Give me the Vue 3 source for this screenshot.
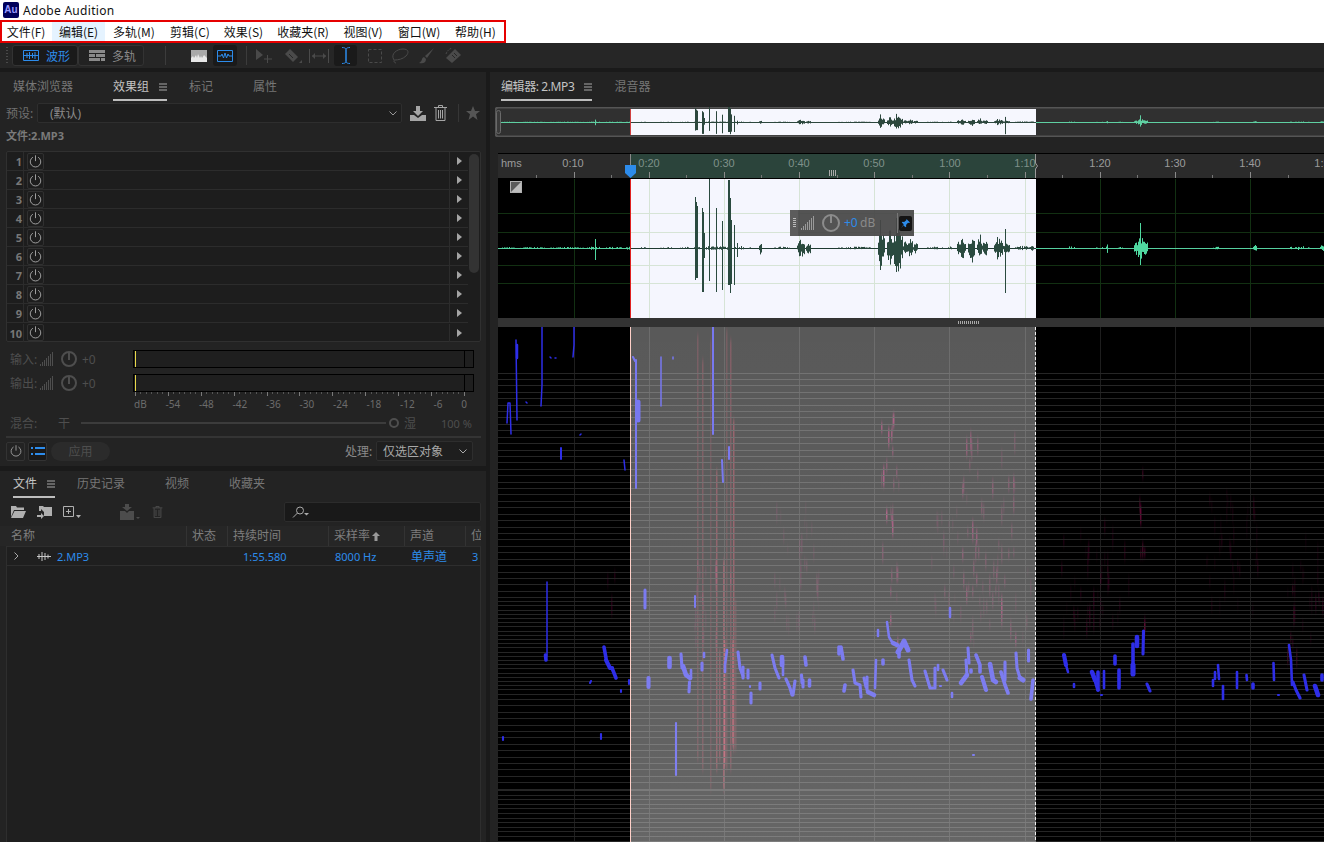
<script setup>
const menus = [
  ['文件(F)', 52], ['编辑(E)', 53], ['多轨(M)', 58], ['剪辑(C)', 54], ['效果(S)', 53],
  ['收藏夹(R)', 66], ['视图(V)', 54], ['窗口(W)', 58], ['帮助(H)', 55],
];
const rackRows = [1, 2, 3, 4, 5, 6, 7, 8, 9, 10];
const scaleLabels = ['dB', '-54', '-48', '-42', '-36', '-30', '-24', '-18', '-12', '-6', '0'];
const signalBars = [2, 4, 6, 8, 10, 12, 14];

const SEL_L = 630;
const SEL_R = 1036;
const MID = 248;

// seeded so that every run draws the same picture
let seed = 12345;
function rnd() {
  seed = (seed * 1664525 + 1013904223) % 4294967296;
  return seed / 4294967296;
}

/* ---- waveform ---- */
const lumps = [
  [500, 515, 1.5], [520, 545, 1.5], [550, 585, 1.5], [586, 600, 3.5], [606, 622, 2], [626, 630, 3],
  [640, 646, 2], [660, 676, 1.5], [680, 690, 2], [694, 738, 3], [738, 744, 3], [748, 752, 1.5],
  [759, 762, 7], [774, 790, 2], [797, 805, 10], [806, 811, 7], [838, 872, 2], [878, 885, 20],
  [887, 892, 20], [892, 903, 25], [903, 907, 7], [907, 913, 12], [913, 918, 6], [926, 943, 2],
  [948, 952, 3], [957, 966, 11], [968, 975, 15], [977, 982, 15], [982, 988, 8], [994, 1003, 13],
  [1003, 1010, 6], [1015, 1030, 3], [1030, 1034, 4], [1064, 1075, 2.5], [1095, 1106, 1.5], [1106, 1108, 5],
  [1118, 1123, 1.5], [1134, 1148, 11], [1213, 1220, 2], [1237, 1240, 2], [1253, 1257, 4], [1288, 1310, 3],
  [1320, 1324, 4],
];
const spikes = [
  [595, 9, 12], [695, 51, 32], [696, 46, 30], [697, 42, 30], [702, 40, 44], [703, 36, 44], [704, 15, 10],
  [709, 70, 33], [716, 40, 44], [722, 27, 42], [728, 68, 37], [729, 68, 37], [730, 50, 45], [731, 28, 36],
  [734, 23, 37], [737, 5, 9], [880, 28, 22], [896, 30, 24], [1005, 19, 45], [1140, 25, 17],
];
const up = {};
const down = {};
lumps.forEach(([a, b, amp]) => {
  for (let x = a; x < b; x++) {
    if (amp <= 3.5 && rnd() < 0.45) continue;
    const t = (x - a) / Math.max(1, b - a);
    const w = 0.4 + 0.6 * Math.sin(Math.PI * t);
    const k = amp <= 3.5 ? 0.7 : 1;
    up[x] = Math.max(up[x] || 0, amp * k * w * (0.3 + 0.7 * rnd()));
    down[x] = Math.max(down[x] || 0, amp * k * w * (0.3 + 0.7 * rnd()));
  }
});
spikes.forEach(([x, u, d]) => {
  up[x] = u;
  down[x] = d;
});

function wavePath(from, to, mid, k) {
  let d = '';
  for (let x = from; x < to; x++) {
    if (!up[x]) continue;
    d += `M${x + 0.5} ${(mid - up[x] * k).toFixed(1)}V${(mid + down[x] * k).toFixed(1)}`;
  }
  return d;
}
const waveOutside = wavePath(498, SEL_L, MID, 1) + wavePath(SEL_R, 1324, MID, 1);
const waveInside = wavePath(SEL_L, SEL_R, MID, 1);
const overOutside = wavePath(498, SEL_L, 122, 0.27) + wavePath(SEL_R, 1324, 122, 0.27);
const overInside = wavePath(SEL_L, SEL_R, 122, 0.27);

/* ---- ruler and grids ---- */
const rulerLabels = [
  ['0:10', 573], ['0:20', 649], ['0:30', 724], ['0:40', 799], ['0:50', 874], ['1:00', 950],
  ['1:10', 1025], ['1:20', 1100], ['1:30', 1175], ['1:40', 1250], ['1:50', 1325],
];
const minorTicks = [];
const majorTicks = [];
for (let i = 0; i < 12; i++) {
  const x = 498.5 + 75.15 * i;
  if (i > 0) majorTicks.push(Math.round(x) + 0.5);
  minorTicks.push(Math.round(x + 37.5) + 0.5);
}
const gridX = majorTicks.filter((x) => x < 1324);
const gridY = [213.5, 232.5, 265.5, 283.5];

/* ---- spectrogram ---- */
const specLines = [];
for (let y = 372.5; y < 596; y += 6.42) specLines.push(Math.round(y) + 0.5);
for (let y = 597; y < 697; y += 4.2) specLines.push(Math.round(y) + 0.5);
for (let y = 699; y < 790; y += 6.4) specLines.push(Math.round(y) + 0.5);
for (let y = 790; y < 842; y += 4.6) specLines.push(Math.round(y) + 0.5);

const hotStreaks = [
  [697, 335, 760, 0.22], [702, 360, 770, 0.26], [710, 340, 790, 0.18], [716, 470, 770, 0.38],
  [723, 560, 790, 0.42], [726, 330, 770, 0.2], [730, 340, 770, 0.28], [733, 420, 750, 0.42],
  [735, 600, 750, 0.2], [724, 640, 765, 0.55], [732, 640, 745, 0.5], [719, 650, 760, 0.35],
];
const clusters = [
  [880, 900, 410, 640, 0.8], [960, 1015, 430, 640, 0.5], [1138, 1146, 420, 640, 0.6],
  [1285, 1300, 520, 650, 0.3], [1020, 1030, 560, 640, 0.25], [605, 615, 550, 600, 0.3],
  [1060, 1130, 520, 620, 0.2], [1205, 1260, 490, 610, 0.15], [690, 740, 560, 640, 0.3],
  [770, 820, 500, 620, 0.22], [930, 960, 500, 620, 0.2], [1300, 1324, 530, 640, 0.2],
];
const speckles = [];
clusters.forEach(([x1, x2, y1, y2, a]) => {
  const n = Math.round((x2 - x1) * (y2 - y1) / 180);
  for (let i = 0; i < n; i++) {
    speckles.push({
      x: Math.round(x1 + (x2 - x1) * rnd()),
      y: Math.round(y1 + (y2 - y1) * rnd()),
      h: 4 + Math.round(rnd() * 16),
      o: (a * (0.3 + 0.7 * rnd())).toFixed(2),
    });
  }
});

// each stroke: width, then x y pairs in page coordinates
const strokes = [
  [1.5, 516, 340, 517, 420], [2.5, 517, 345, 517, 358], [1.5, 542, 327, 542, 385, 541, 406],
  [1.5, 574, 327, 574, 345, 573, 357], [1.5, 550, 357, 551, 358], [1.5, 555, 358, 556, 358],
  [1.5, 526, 402, 527, 403], [1.5, 507, 423, 508, 403, 510, 403, 511, 434],
  [1.5, 580, 435, 581, 434], [2, 561, 448, 561, 459], [1.5, 624, 460, 625, 470],
  [1.5, 547, 582, 547, 655, 546, 660], [3, 545.5, 655, 546, 660],
  [3, 604, 647, 606, 658], [3.5, 606, 660, 610, 668, 612, 668], [3, 612, 668, 616, 678],
  [1.5, 590, 683, 591, 681], [1.5, 621, 690, 621, 692], [1.5, 629, 680, 629, 684],
  [1.5, 503, 737, 503, 740], [1.5, 601, 734, 601, 739],
  [2, 636, 360, 636, 488], [2, 633, 357, 635, 361], [5, 638, 402, 638, 420], [1.5, 661, 357, 661, 406],
  [2, 713, 327, 713, 434], [1.5, 673, 357, 673, 359], [2, 729, 447, 729, 459], [2, 722, 460, 723, 482],
  [3, 645, 590, 645, 608], [2, 695, 596, 695, 607], [1.5, 676, 723, 676, 775], [2.5, 950, 608, 950, 617],
  [1.5, 973, 755, 974, 755],
  [4, 669.5, 658, 669.5, 667], [3.5, 648.5, 678, 648.5, 687], [2.5, 681, 654, 682, 668], [4, 683, 666, 686, 675, 690, 678],
  [2, 691, 670, 691, 678], [2.5, 689.5, 682, 689, 692], [2, 704, 653, 704, 657], [2.5, 702, 663, 702, 670],
  [2, 727, 650, 725, 665, 725, 672], [2.5, 738, 652, 740, 668, 743, 676], [2.5, 743, 667, 743, 678], [2.5, 748, 670, 748, 678],
  [1.5, 750, 686, 750, 687], [2.5, 751, 693, 751, 703], [2.5, 760, 683, 760, 689],
  [2.5, 772, 655, 775, 668, 779, 678], [2, 783, 660, 783, 675], [4, 782, 657, 782, 665],
  [2.5, 786, 679, 790, 688, 792, 695], [2.5, 795, 681, 793, 695], [2.5, 801.5, 675, 802, 683], [2.5, 803, 680, 803, 687],
  [3, 805, 657, 806, 665], [3, 809.5, 680, 809.5, 686], [3, 839, 647, 839, 654],
  [3, 841, 647, 843, 659], [3, 845, 685, 844, 691], [2.5, 853, 670, 855, 683, 860, 685, 861, 697],
  [2.5, 864, 678, 866, 687], [2.5, 867, 677, 867, 690], [4, 868, 692, 874, 695], [2, 876, 660, 875, 688],
  [2.5, 878, 630, 878, 636], [3, 883, 660, 883, 664], [2.5, 887, 622, 889, 637, 892, 642], [4, 893, 643, 897, 645],
  [5, 898, 652, 902, 645, 904, 641, 908, 650], [3, 899, 653, 899, 657], [2.5, 909, 660, 912, 680, 915, 686],
  [2.5, 925, 671, 930, 688, 933, 688], [2.5, 935, 668, 935, 688], [2, 938, 665, 938, 670], [2.5, 943, 670, 947, 680],
  [1.5, 940, 686, 941, 686], [2, 952, 693, 952, 697], [4, 961, 683, 967, 675], [2.5, 967, 675, 966, 660],
  [2.5, 968, 648, 969, 663], [3, 971, 670, 971, 672], [3, 976, 655, 980, 665, 980, 672], [3.5, 982, 677, 986, 690],
  [4, 990, 664, 993, 680, 996, 682], [3, 1001, 672, 1005, 685, 1008, 693], [2.5, 1005, 662, 1005, 680],
  [2.5, 1016, 653, 1017, 668, 1020, 678], [5, 1020, 678, 1023, 680], [2.5, 1028.5, 650, 1028.5, 661], [3, 1033, 680, 1031, 699],
  [3.5, 1064, 655, 1066, 665], [2, 1066, 665, 1068, 672], [2, 1074, 684, 1074, 687], [4, 1092, 672, 1095, 680], [3, 1095, 680, 1098, 690],
  [3, 1098, 672, 1098, 690], [2, 1104, 671, 1104, 688], [1.5, 1101, 695, 1102, 695], [3, 1115, 656, 1115, 664],
  [3, 1119, 670, 1119, 688], [3, 1133, 644, 1133, 674], [4.5, 1133, 665, 1133, 674], [4, 1137, 637, 1137, 646],
  [2.5, 1143.5, 631, 1143, 654], [2.5, 1147, 684, 1150, 691], [2, 1213, 680, 1213, 686], [2, 1215, 672, 1215, 679],
  [2, 1218, 665, 1219, 679], [2, 1223, 686, 1223, 699], [2, 1237, 672, 1237, 688], [2, 1246.5, 675, 1247, 680],
  [3, 1253, 684, 1253, 688], [2, 1273.5, 663, 1274, 680], [1.5, 1278, 695, 1279, 695],
  [2, 1289, 645, 1291, 660, 1292, 685], [2.5, 1293, 682, 1296, 690, 1300, 698], [2.5, 1304, 675, 1307, 690],
  [4, 1315, 686, 1318, 695], [3, 1322, 675, 1322, 680],
].map(([w, ...p]) => ({ w: p[1] > 630 && w < 5 ? w + 0.6 : w, points: p.join(' ') }));
</script>

<template>
  <div class="app">
    <svg class="sprite" width="0" height="0">
      <symbol id="i-power" viewBox="0 0 16 16">
        <path d="M5.2 3.4a5.6 5.6 0 1 0 5.6 0M8 1.4v6.2" fill="none" stroke="currentColor" stroke-width="1" />
      </symbol>
      <symbol id="i-menu" viewBox="0 0 8 8">
        <path d="M0 1h8M0 4h8M0 7h8" stroke="currentColor" stroke-width="1" />
      </symbol>
    </svg>

    <div class="titlebar">
      <span class="au-logo">Au</span>
      <span>Adobe Audition</span>
    </div>
    <div class="menubar">
      <span
        v-for="([m, w], i) in menus"
        :key="m"
        class="menu-item"
        :class="{ hover: i === 1 }"
        :style="{ width: w + 'px' }"
      >{{ m }}</span>
    </div>

    <div class="toolbar">
      <span class="grip"></span>
      <div class="mode-group">
        <button class="mode-btn on">
          <svg width="16" height="11" viewBox="0 0 16 11"><path d="M.5.5h15v10H.5zM0 5.5h16M4 3v5M6.5 2v7M9.5 3v5M12 2v7" fill="none" stroke="currentColor" /></svg>
          <span>波形</span>
        </button>
        <button class="mode-btn">
          <svg width="16" height="11" viewBox="0 0 16 11"><path d="M0 0h16v3H0zM0 4h6v3H0zM7 4h9v3H7zM0 8h11v3H0zM12 8h4v3h-4z" fill="currentColor" /></svg>
          <span>多轨</span>
        </button>
      </div>
      <span class="tool-sep first"></span>
      <svg class="tool view" width="16" height="12" viewBox="0 0 16 12"><rect width="16" height="12" fill="#a9a9a9" /><path d="M0 12V8l2-2 1 2 2-3 1 3 1-4 2 4 1-2 1 2 2-3 3 3v4z" fill="#e8e8e8" /></svg>
      <span class="tool-box wave-view">
        <svg width="16" height="12" viewBox="0 0 16 12"><path d="M.5.5h15v11H.5zM1 6h3l1-2 1.500 4L8 3l1.500 5L11 4l1 2h3" fill="none" stroke="#2d8ceb" /></svg>
      </span>
      <span class="tool-sep"></span>
      <svg class="tool t-move" width="18" height="16" viewBox="0 0 18 16"><path d="M1 1l7 6-7 5z" fill="#4a4a4a" /><path d="M12.500 7v8M9 11h8" stroke="#4a4a4a" /></svg>
      <svg class="tool t-razor" width="18" height="16" viewBox="0 0 18 16"><path d="M1 6l5-5 8 8-5 5z" fill="#4a4a4a" /><path d="M5 6l4 4" stroke="#262626" /><path d="M15 15h3v-3z" fill="#4a4a4a" /></svg>
      <svg class="tool t-slip" width="20" height="14" viewBox="0 0 20 14"><path d="M.5 0v14M19.500 0v14M3 7h14" stroke="#4a4a4a" fill="none" /><path d="M3 7l3-3v6zM17 7l-3-3v6z" fill="#4a4a4a" /></svg>
      <span class="tool-box t-beam">
        <svg width="10" height="17" viewBox="0 0 10 17"><path d="M1 .5c2 0 4 .5 4 2v12c0 1.500-2 2-4 2M9 .5c-2 0-4 .5-4 2v12c0 1.500 2 2 4 2" fill="none" stroke="#2d8ceb" /></svg>
      </span>
      <svg class="tool t-marquee" width="14" height="14" viewBox="0 0 14 14"><rect x=".5" y=".5" width="13" height="13" fill="none" stroke="#4a4a4a" stroke-dasharray="3 2" /></svg>
      <svg class="tool t-lasso" width="18" height="16" viewBox="0 0 18 16"><path d="M3 12C-1 6 6 1 12 1s6 4 3 7-8 4-11 4c-2 0-1 3 1 3" fill="none" stroke="#4a4a4a" /></svg>
      <svg class="tool t-brush" width="18" height="16" viewBox="0 0 18 16"><path d="M17 0L8 8l2 2zM7 9c-3 1-1 4-5 6 4 1 7 0 7-4z" fill="#4a4a4a" /></svg>
      <svg class="tool t-heal" width="18" height="16" viewBox="0 0 18 16"><path d="M1 10l9-9 6 6-9 8z" fill="#4a4a4a" /><path d="M1 6c1-3 3-5 6-6" fill="none" stroke="#4a4a4a" stroke-dasharray="2 1" /><path d="M7 7l3 3M9 5l3 3" stroke="#262626" /></svg>
    </div>

    <div class="workspace">
      <div class="left">
        <section class="panel effects">
          <div class="tabs">
            <span class="tab">媒体浏览器</span>
            <span class="tab active">效果组<svg class="menu-ico" width="8" height="8"><use href="#i-menu" /></svg></span>
            <span class="tab">标记</span>
            <span class="tab">属性</span>
          </div>

          <div class="preset">
            <span class="preset-label">预设:</span>
            <div class="select preset-select">
              <span>(默认)</span>
              <svg width="8" height="5" viewBox="0 0 8 5"><path d="M.5.500L4 4 7.500.500" fill="none" stroke="#999" /></svg>
            </div>
            <svg class="p-import" width="16" height="15" viewBox="0 0 16 15"><path d="M6 0h4v5h3L8 10 3 5h3zM0 9h4l4 3 4-3h4v6H0z" fill="#a5a5a5" /></svg>
            <svg class="p-trash" width="13" height="16" viewBox="0 0 13 16"><path d="M0 2.500h13M4.500 2.500V.5h4v2M2 3v12.500h9V3M4.500 5v8.500M6.500 5v8.500M8.500 5v8.500" fill="none" stroke="#a5a5a5" /></svg>
            <span class="p-sep"></span>
            <svg class="p-star" width="14" height="14" viewBox="0 0 14 14"><path d="M7 0l2 5h5l-4 3.300L11.500 14 7 10.500 2.500 14 4 8.300 0 5h5z" fill="#555" /></svg>
          </div>

          <div class="file-name">文件:2.MP3</div>

          <div class="rack">
            <div v-for="n in rackRows" :key="n" class="rack-row">
              <span class="rack-num">{{ n }}</span>
              <span class="rack-power"><svg width="15" height="15"><use href="#i-power" /></svg></span>
              <span class="rack-slot"></span>
              <span class="rack-arrow"></span>
            </div>
            <span class="rack-thumb"></span>
          </div>

          <div class="io-row first">
            <span class="io-label">输入:</span>
            <span class="bars"><i v-for="b in signalBars" :key="b" :style="{ height: b + 'px' }"></i></span>
            <span class="knob"></span>
            <span class="io-val">+0</span>
            <div class="meter"></div>
          </div>
          <div class="io-row">
            <span class="io-label">输出:</span>
            <span class="bars"><i v-for="b in signalBars" :key="b" :style="{ height: b + 'px' }"></i></span>
            <span class="knob"></span>
            <span class="io-val">+0</span>
            <div class="meter"></div>
          </div>
          <div class="scale-ticks"></div>
          <div class="scale"><span v-for="s in scaleLabels" :key="s">{{ s }}</span></div>

          <div class="mix">
            <span class="mix-label">混合:</span>
            <span class="mix-dry">干</span>
            <span class="mix-track"></span>
            <span class="mix-thumb"></span>
            <span class="mix-wet">湿</span>
            <span class="mix-val">100 %</span>
          </div>
          <div class="fx-line"></div>

          <div class="fx-bottom">
            <span class="sq-btn"><svg width="14" height="14"><use href="#i-power" /></svg></span>
            <span class="sq-btn blue">
              <svg width="14" height="10" viewBox="0 0 14 10"><path d="M0 1h2v2H0zM0 7h2v2H0zM4 1h10v2H4zM4 7h10v2H4z" fill="#2d8ceb" /></svg>
            </span>
            <span class="apply">应用</span>
            <span class="proc-label">处理:</span>
            <div class="select proc-select">
              <span>仅选区对象</span>
              <svg width="8" height="5" viewBox="0 0 8 5"><path d="M.5.500L4 4 7.500.500" fill="none" stroke="#aaa" /></svg>
            </div>
          </div>
        </section>

        <section class="panel files">
          <div class="tabs files-tabs">
            <span class="tab active">文件<svg class="menu-ico" width="8" height="8"><use href="#i-menu" /></svg></span>
            <span class="tab">历史记录</span>
            <span class="tab">视频</span>
            <span class="tab">收藏夹</span>
          </div>

          <div class="file-tools">
            <svg class="f-open" width="15" height="12" viewBox="0 0 15 12"><path d="M0 0h5l1 1.500h7V4H3L0 11zM3.500 5H15l-3 7H0z" fill="#b0b0b0" /></svg>
            <svg class="f-import" width="16" height="14" viewBox="0 0 16 14"><path d="M2 1h4l1 1h8v9H7V7L4 4v2H2z" fill="#b0b0b0" /><path d="M0 10h4V8l3 3-3 3v-2H0z" fill="#b0b0b0" /></svg>
            <svg class="f-new" width="18" height="12" viewBox="0 0 18 12"><path d="M.5.500h10v10H.5zM5.500 3v5M3 5.500h5" fill="none" stroke="#b0b0b0" /><path d="M13 9h5l-2.500 3z" fill="#b0b0b0" /></svg>
            <svg class="f-insert" width="20" height="16" viewBox="0 0 20 16"><path d="M5 0h4v3h3L7 7 2 3h3zM0 7h5l2 2 2-2h5v9H0z" fill="#4c4c4c" /><path d="M16 13h4l-2 2z" fill="#4c4c4c" /></svg>
            <svg class="f-trash" width="11" height="12" viewBox="0 0 13 16"><path d="M0 2.500h13M4.500 2.500V.5h4v2M2 3v12.500h9V3M4.500 5v8.500M8.500 5v8.500" fill="none" stroke="#4c4c4c" stroke-width="1.300" /></svg>
            <div class="search">
              <svg width="18" height="12" viewBox="0 0 18 12"><circle cx="8" cy="4.500" r="3.500" fill="none" stroke="#aaa" /><path d="M5.500 7L1 11.500" stroke="#aaa" /><path d="M12 7h5l-2.500 2.500z" fill="#aaa" /></svg>
            </div>
          </div>

          <div class="list-head">
            <span class="col c-name">名称</span>
            <span class="col c-status">状态</span>
            <span class="col c-dur">持续时间</span>
            <span class="col c-rate">采样率<svg width="8" height="9" viewBox="0 0 8 9"><path d="M4 0l4 4H5.500v5h-3V4H0z" fill="#999" /></svg></span>
            <span class="col c-chan">声道</span>
            <span class="col c-bit">位</span>
          </div>
          <div class="list">
            <div class="list-row">
              <svg class="row-chev" width="5" height="8" viewBox="0 0 5 8"><path d="M.5.500L4 4 .5 7.500" fill="none" stroke="#aaa" /></svg>
              <svg class="row-wave" width="14" height="9" viewBox="0 0 14 9"><path d="M0 4.500h14M2 2v5M5 0v9M8 1v7M11 2.500v4" stroke="#c8c8c8" fill="none" /></svg>
              <span class="row-name">2.MP3</span>
              <span class="row-dur">1:55.580</span>
              <span class="row-rate">8000 Hz</span>
              <span class="row-chan">单声道</span>
              <span class="row-bit">3</span>
            </div>
          </div>
        </section>
      </div>

      <section class="panel right">
        <div class="tabs editor-tabs">
          <span class="tab active">编辑器: 2.MP3<svg class="menu-ico" width="8" height="8"><use href="#i-menu" /></svg></span>
          <span class="tab">混音器</span>
        </div>

        <div class="overview">
          <svg width="829" height="30" viewBox="495 107 829 30">
            <rect x="495.500" y="107.500" width="840" height="29" rx="3" fill="#303030" stroke="#555" stroke-width="2" />
            <rect :x="SEL_L" y="109" :width="SEL_R - SEL_L" height="26" fill="#f6f7fe" />
            <path d="M498 122.500H1324" stroke="#5fd0a2" />
            <path :d="'M' + SEL_L + ' 122.500H' + SEL_R" stroke="#2c473d" />
            <path :d="overOutside" stroke="#5fd0a2" />
            <path :d="overInside" stroke="#2c473d" />
            <path d="M630.500 109v26" stroke="#d04040" />
            <rect x="496.500" y="110.500" width="4" height="23" rx="2" fill="#3a3a3a" stroke="#6a6a6a" />
          </svg>
        </div>

        <svg class="ruler" width="826" height="26" viewBox="498 153 826 26">
          <rect x="498" y="153" width="826" height="26" fill="#2b2b2b" />
          <rect :x="SEL_L" y="153" :width="SEL_R - SEL_L" height="25" fill="#2b443b" />
          <path d="M498 153.500H1324M498 178.500H1324" stroke="#000" />
          <path v-for="x in majorTicks" :key="x" :d="'M' + x + ' 172V178'" stroke="#8a8a8a" />
          <path v-for="x in minorTicks" :key="x" :d="'M' + x + ' 175V178'" stroke="#777" />
          <text x="501" y="167" class="ruler-text">hms</text>
          <text
            v-for="[t, x] in rulerLabels"
            :key="t"
            :x="x"
            y="167"
            text-anchor="middle"
            class="ruler-text"
            :class="{ dim: x > SEL_L && x < SEL_R }"
          >{{ t }}</text>
          <path d="M829.500 170v6M831.500 170v6M833.500 170v6M835.500 170v6" stroke="#aaa" />
          <path d="M630.500 154v12" stroke="#888" />
          <path d="M625 165h11v8l-5.500 5-5.500-5z" fill="#2d8ceb" />
          <path d="M1035.500 154v9l2 3-2 3v9" fill="none" stroke="#9a9a9a" />
        </svg>

        <div class="wave">
          <svg width="826" height="139" viewBox="498 179 826 139">
            <rect x="498" y="179" width="826" height="139" fill="#000" />
            <rect :x="SEL_L" y="179" :width="SEL_R - SEL_L" height="139" fill="#f5f6fe" />
            <g stroke="#123012">
              <path v-for="y in gridY" :key="y" :d="'M498 ' + y + 'H' + SEL_L + 'M' + SEL_R + ' ' + y + 'H1324'" />
              <path v-for="x in gridX" :key="x" v-show="x < SEL_L || x > SEL_R" :d="'M' + x + ' 179V318'" />
            </g>
            <g stroke="#d6e4d6">
              <path v-for="y in gridY" :key="y" :d="'M' + SEL_L + ' ' + y + 'H' + SEL_R" />
              <path v-for="x in gridX" :key="x" v-show="x > SEL_L && x < SEL_R" :d="'M' + x + ' 179V318'" />
            </g>
            <path d="M498 248.500H1324" stroke="#55cf9f" />
            <path :d="waveOutside" stroke="#4fd8a0" />
            <path :d="'M' + SEL_L + ' 248.500H' + SEL_R" stroke="#1e3a31" />
            <path :d="waveInside" stroke="#2a4a3f" />
            <path d="M630.500 179V318" stroke="#e02020" />
            <rect x="510.500" y="181.500" width="11" height="11" fill="#5a5a5a" stroke="#b0b0b0" />
            <path d="M511 192L521 182V192z" fill="#bdbdbd" />
          </svg>
          <div class="hud">
            <span class="hud-grip"></span>
            <span class="hud-bars"><i v-for="b in signalBars" :key="b" :style="{ height: b + 'px' }"></i></span>
            <span class="hud-knob"></span>
            <span class="hud-plus">+0</span>
            <span class="hud-db">dB</span>
            <span class="hud-sep"></span>
            <span class="hud-pin">
              <svg width="11" height="11" viewBox="0 0 11 11"><path d="M6.500 1L10 4.500l-1 .5-1-.3L6 7l.3 1.500-1 .8-1.800-2L1 10.500l2.700-4.200-1.900-1.800.8-.8 1.500.3 2.200-1.800z" fill="#2d8ceb" /></svg>
            </span>
          </div>
        </div>

        <div class="splitter"><span></span></div>

        <div class="spectro">
          <svg width="826" height="515" viewBox="498 327 826 515">
            <defs>
              <linearGradient id="selShade" x1="0" y1="0" x2="0" y2="1">
                <stop offset="0" stop-color="#fff" stop-opacity=".35" />
                <stop offset=".6" stop-color="#fff" stop-opacity=".37" />
                <stop offset="1" stop-color="#fff" stop-opacity=".4" />
              </linearGradient>
              <filter id="soft" x="-50%" y="-5%" width="200%" height="110%"><feGaussianBlur stdDeviation=".7 3" /></filter>
            </defs>
            <rect x="498" y="327" width="826" height="515" fill="#000" />
            <path v-for="x in gridX" :key="x" :d="'M' + x + ' 327V842'" stroke="#1e1e1e" />
            <g filter="url(#soft)">
              <rect v-for="(s, i) in speckles" :key="i" :x="s.x" :y="s.y" width="1.500" :height="s.h" fill="#c01868" :opacity="s.o" />
              <rect v-for="(s, i) in hotStreaks" :key="i" :x="s[0]" :y="s[1]" width="1.500" :height="s[2] - s[1]" fill="#e02848" :opacity="s[3]" />
            </g>
            <path v-for="y in specLines" :key="y" :d="'M498 ' + y + 'H1324'" stroke="#262626" />
            <polyline
              v-for="(s, i) in strokes"
              :key="i"
              :points="s.points"
              :stroke-width="s.w"
              fill="none"
              stroke="#2e2ee8"
              stroke-linecap="round"
              stroke-linejoin="round"
            />
            <rect :x="SEL_L" y="327" :width="SEL_R - SEL_L" height="515" fill="url(#selShade)" />
            <path d="M630.500 327V842" stroke="#ffd0c8" />
            <path d="M1035.500 327V842" stroke="#eee" stroke-dasharray="3 2" />
          </svg>
        </div>
      </section>
    </div>
  </div>
</template>

<style>
html,
body {
  margin: 0;
  background: #1a1a1a;
}
</style>

<style scoped>
.app {
  width: 1324px;
  height: 842px;
  overflow: hidden;
  display: flex;
  flex-direction: column;
  background: #1a1a1a;
  font-family: "Noto Sans", "Noto Sans CJK SC", sans-serif;
  font-size: 12px;
  color: #8a8a8a;
}
.sprite {
  position: absolute;
}

.titlebar {
  height: 20px;
  background: #fff;
  color: #111;
  display: flex;
  align-items: center;
  gap: 4px;
  padding-left: 3px;
  font-size: 12px;
  letter-spacing: .3px;
}
.au-logo {
  width: 16px;
  height: 16px;
  border-radius: 2px;
  background: #00005b;
  color: #9999ff;
  font: bold 10px/16px "Liberation Sans", sans-serif;
  text-align: center;
  letter-spacing: 0;
}
.menubar {
  height: 23px;
  background: #fff;
  display: flex;
  align-items: center;
  position: relative;
}
.menubar::after {
  content: "";
  position: absolute;
  left: 0;
  top: 0;
  width: 502px;
  height: 19px;
  border: 2px solid #e60000;
}
.menu-item {
  height: 19px;
  line-height: 19px;
  color: #111;
  font-family: "Noto Sans CJK SC", sans-serif;
  white-space: nowrap;
  text-align: center;
  flex: none;
}
.menu-item.hover {
  background: #e5f3ff;
}

.toolbar {
  height: 25px;
  flex: none;
  background: #262626;
  display: flex;
  align-items: center;
  color: #8a8a8a;
}
.grip {
  width: 2px;
  height: 18px;
  margin-left: 6px;
  background: repeating-linear-gradient(to bottom, #4a4a4a 0 1px, transparent 1px 3px);
}
.mode-group {
  display: flex;
  margin-left: 4px;
}
.mode-btn {
  width: 66px;
  height: 21px;
  padding: 0 0 0 10px;
  display: flex;
  align-items: center;
  gap: 7px;
  background: #222;
  border: 1px solid #333;
  border-radius: 3px;
  color: #8a8a8a;
  font: inherit;
}
.mode-btn.on {
  background: #1a1a1a;
  color: #2d8ceb;
}
.tool-sep {
  width: 1px;
  height: 19px;
  background: #3c3c3c;
  margin-left: 9px;
}
.tool-sep.first {
  margin-left: 21px;
}
.tool {
  flex: none;
}
.view {
  margin-left: 25px;
}
.tool-box {
  display: flex;
  align-items: center;
  justify-content: center;
  height: 21px;
  background: #1a1a1a;
  border-radius: 3px;
}
.wave-view {
  width: 24px;
  margin-left: 6px;
}
.t-move {
  margin-left: 8px;
}
.t-razor {
  margin-left: 11px;
}
.t-slip {
  margin-left: 7px;
}
.t-beam {
  width: 23px;
  margin-left: 5px;
}
.t-marquee {
  margin-left: 11px;
}
.t-lasso {
  margin-left: 9px;
}
.t-brush {
  margin-left: 8px;
}
.t-heal {
  margin-left: 10px;
}

.workspace {
  flex: 1;
  min-height: 0;
  display: flex;
  gap: 4px;
  padding-top: 4px;
}
.left {
  width: 486px;
  flex: none;
  display: flex;
  flex-direction: column;
  gap: 5px;
}
.panel {
  background: #232323;
}
.effects {
  height: 394px;
  flex: none;
}
.files {
  flex: 1;
}
.right {
  flex: 1;
  min-width: 0;
}

.tabs {
  height: 30px;
  display: flex;
  align-items: center;
  padding-left: 13px;
  box-sizing: border-box;
}
.tab {
  line-height: 24px;
  height: 24px;
  margin-left: 40px;
  color: #767676;
  white-space: nowrap;
  display: flex;
  align-items: center;
}
.tab:first-child {
  margin-left: 0;
}
.tab.active {
  color: #c4c4c4;
  border-bottom: 2px solid #bdbdbd;
  margin-top: 2px;
}
.effects .tab:nth-child(3) {
  margin-left: 22px;
}
.menu-ico {
  margin-left: 10px;
  color: #a8a8a8;
}
.editor-tabs {
  padding-left: 11px;
}
.editor-tabs .tab.active {
  letter-spacing: -.4px;
}
.editor-tabs .tab:nth-child(2) {
  margin-left: 22px;
}
.files-tabs {
  height: 26px;
}
.files-tabs .tab:nth-child(2) {
  margin-left: 22px;
}

.preset {
  display: flex;
  align-items: center;
  height: 20px;
  margin-top: 1px;
  padding-left: 6px;
}
.preset-label {
  width: 31px;
  color: #707070;
}
.select {
  display: flex;
  align-items: center;
  justify-content: space-between;
  box-sizing: border-box;
  height: 20px;
  background: #1e1e1e;
  border: 1px solid #2e2e2e;
  border-radius: 2px;
}
.preset-select {
  width: 365px;
  padding: 0 4px 0 12px;
  color: #8a8a8a;
}
.p-import {
  margin-left: 8px;
}
.p-trash {
  margin-left: 8px;
}
.p-sep {
  width: 1px;
  height: 18px;
  background: #363636;
  margin-left: 11px;
}
.p-star {
  margin-left: 7px;
}

.file-name {
  height: 18px;
  line-height: 18px;
  margin-top: 4px;
  padding-left: 6px;
  font-size: 11px;
  font-weight: 700;
  color: #7a7a7a;
}

.rack {
  position: relative;
  width: 475px;
  height: 191px;
  box-sizing: border-box;
  margin: 6px 0 0 6px;
  background: #1d1d1d;
  border: 1px solid #303030;
  border-radius: 2px;
}
.rack-row {
  width: 461px;
  height: 19px;
  box-sizing: border-box;
  display: flex;
  align-items: center;
  border-bottom: 1px solid #2c2c2c;
}
.rack-row:last-of-type {
  border-bottom: 0;
}
.rack-num {
  width: 17px;
  padding-right: 1px;
  text-align: right;
  box-sizing: border-box;
  font-weight: 700;
  font-size: 11px;
  color: #777;
  border-right: 1px solid #2c2c2c;
  height: 18px;
  line-height: 19px;
}
.rack-power {
  width: 17px;
  height: 17px;
  margin-left: 3px;
  display: flex;
  align-items: center;
  justify-content: center;
  border: 1px solid #303030;
  border-radius: 2px;
  box-sizing: border-box;
  color: #a5a5a5;
}
.rack-slot {
  flex: 1;
}
.rack-arrow {
  width: 19px;
  height: 18px;
  box-sizing: border-box;
  border-left: 1px solid #2c2c2c;
  position: relative;
}
.rack-arrow::after {
  content: "";
  position: absolute;
  left: 7px;
  top: 5px;
  border-left: 5px solid #a5a5a5;
  border-top: 4px solid transparent;
  border-bottom: 4px solid transparent;
}
.rack-thumb {
  position: absolute;
  left: 462px;
  top: 2px;
  width: 10px;
  height: 119px;
  border-radius: 5px;
  background: #333;
}

.io-row {
  display: flex;
  align-items: center;
  height: 18px;
  margin-top: 6px;
  padding-left: 10px;
  color: #4e4e4e;
}
.io-row.first {
  margin-top: 8px;
}
.io-label {
  width: 30px;
}
.bars {
  display: flex;
  align-items: flex-end;
  gap: 1px;
  width: 15px;
  height: 14px;
}
.bars i {
  width: 1px;
  background: #4e4e4e;
}
.knob {
  width: 16px;
  height: 16px;
  box-sizing: border-box;
  margin-left: 6px;
  border: 2px solid #4e4e4e;
  border-radius: 50%;
  position: relative;
}
.knob::after {
  content: "";
  position: absolute;
  left: 5px;
  top: 0;
  width: 2px;
  height: 7px;
  background: #4e4e4e;
}
.io-val {
  margin-left: 5px;
  width: 51px;
}
.meter {
  width: 341px;
  height: 18px;
  box-sizing: border-box;
  background: #1f1f1f;
  border: 1px solid #000;
  position: relative;
}
.meter::before {
  content: "";
  position: absolute;
  left: 1px;
  top: 0;
  bottom: 0;
  width: 1px;
  background: #e8d84a;
}
.meter::after {
  content: "";
  position: absolute;
  right: 8px;
  top: 0;
  bottom: 0;
  width: 1px;
  background: #000;
}
.scale-ticks {
  width: 330px;
  height: 4px;
  margin-left: 135px;
  background:
    repeating-linear-gradient(to right, #7a7a7a 0 1px, transparent 1px 32.88px) 0 0 / 100% 4px no-repeat,
    repeating-linear-gradient(to right, #555 0 1px, transparent 1px 5.48px) 0 0 / 100% 2px no-repeat;
}
.scale {
  display: flex;
  justify-content: space-between;
  width: 333px;
  height: 14px;
  line-height: 14px;
  margin: 1px 0 0 134px;
  font-size: 10px;
  color: #6c6c6c;
}

.mix {
  display: flex;
  align-items: center;
  height: 16px;
  margin-top: 4px;
  padding-left: 10px;
  color: #4e4e4e;
}
.mix-label {
  width: 48px;
}
.mix-dry {
  width: 23px;
}
.mix-track {
  width: 305px;
  height: 2px;
  background: #3c3c3c;
}
.mix-thumb {
  width: 6px;
  height: 6px;
  margin-left: 3px;
  border: 2px solid #4e4e4e;
  border-radius: 50%;
}
.mix-wet {
  margin-left: 5px;
  width: 37px;
}
.mix-val {
  font-size: 11px;
}
.fx-line {
  width: 475px;
  height: 2px;
  margin: 5px 0 0 6px;
  background: #343434;
}
.fx-bottom {
  display: flex;
  align-items: center;
  height: 20px;
  margin-top: 3px;
  padding-left: 6px;
}
.sq-btn {
  width: 19px;
  height: 19px;
  display: flex;
  align-items: center;
  justify-content: center;
  box-sizing: border-box;
  border: 1px solid #333;
  border-radius: 2px;
  color: #a5a5a5;
}
.sq-btn.blue {
  margin-left: 3px;
  background: #191919;
}
.apply {
  width: 59px;
  height: 19px;
  margin-left: 4px;
  line-height: 19px;
  text-align: center;
  border-radius: 10px;
  background: #2b2b2b;
  color: #4e4e4e;
}
.proc-label {
  margin-left: auto;
  width: 31px;
  color: #8a8a8a;
}
.proc-select {
  width: 97px;
  margin-right: 13px;
  padding: 0 5px 0 6px;
  color: #a8a8a8;
}

.file-tools {
  display: flex;
  align-items: center;
  height: 20px;
  margin-top: 5px;
}
.f-open {
  margin-left: 11px;
}
.f-import {
  margin-left: 11px;
}
.f-new {
  margin-left: 10px;
}
.f-insert {
  margin-left: 39px;
}
.f-trash {
  margin-left: 12px;
}
.search {
  width: 197px;
  height: 20px;
  margin-left: 121px;
  box-sizing: border-box;
  display: flex;
  align-items: center;
  padding-left: 7px;
  background: #191919;
  border: 1px solid #2c2c2c;
  border-radius: 2px;
}
.list-head {
  display: flex;
  height: 20px;
  line-height: 20px;
  margin-top: 4px;
  background: #262626;
  overflow: hidden;
  width: 481px;
  color: #7e7e7e;
}
.col {
  box-sizing: border-box;
  height: 20px;
  flex: none;
  padding-left: 5px;
  border-right: 1px solid #333;
  white-space: nowrap;
  display: flex;
  align-items: center;
  gap: 2px;
}
.c-name {
  width: 187px;
  padding-left: 11px;
}
.c-status {
  width: 41px;
}
.c-dur {
  width: 101px;
}
.c-rate {
  width: 76px;
}
.c-chan {
  width: 61px;
}
.c-bit {
  border-right: 0;
}
.list {
  width: 475px;
  height: 297px;
  margin-left: 6px;
  box-sizing: border-box;
  border: 1px solid #2e2e2e;
  background: #1f1f1f;
}
.list-row {
  height: 18px;
  display: flex;
  align-items: center;
  border-bottom: 1px solid #2e2e2e;
  color: #2d8ceb;
  font-size: 11px;
  white-space: nowrap;
}
.row-chev {
  margin-left: 7px;
}
.row-wave {
  margin-left: 18px;
}
.row-name {
  margin-left: 6px;
  width: 186px;
}
.row-dur {
  width: 92px;
}
.row-rate {
  width: 76px;
}
.row-chan {
  width: 61px;
  font-size: 12px;
}

.overview {
  margin: 5px 0 0 5px;
  height: 30px;
  line-height: 0;
}
.ruler {
  display: block;
  margin: 16px 0 0 8px;
}
.ruler-text {
  font-size: 11px;
  fill: #9c9c9c;
  font-family: "Liberation Sans", sans-serif;
}
.ruler-text.dim {
  fill: #7f918a;
}
.wave {
  position: relative;
  height: 139px;
  margin-left: 8px;
  line-height: 0;
}
.hud {
  position: absolute;
  left: 292px;
  top: 31px;
  width: 124px;
  height: 26px;
  display: flex;
  align-items: center;
  background: rgba(70, 70, 70, .93);
  line-height: 1;
}
.hud-grip {
  width: 8px;
  height: 26px;
  background: #5c5c5c;
  position: relative;
}
.hud-grip::after {
  content: "";
  position: absolute;
  left: 3px;
  top: 8px;
  width: 3px;
  height: 10px;
  background: repeating-linear-gradient(to bottom, #bbb 0 1px, transparent 1px 2px);
}
.hud-bars {
  display: flex;
  align-items: flex-end;
  gap: 1px;
  width: 15px;
  height: 14px;
  margin-left: 3px;
}
.hud-bars i {
  width: 1px;
  background: #9a9a9a;
}
.hud-knob {
  width: 18px;
  height: 18px;
  box-sizing: border-box;
  margin-left: 6px;
  border: 2px solid #8c8c8c;
  border-radius: 50%;
  position: relative;
}
.hud-knob::after {
  content: "";
  position: absolute;
  left: 6px;
  top: 0;
  width: 2px;
  height: 7px;
  background: #8c8c8c;
}
.hud-plus {
  margin-left: 4px;
  color: #2d8ceb;
  font-size: 12px;
  width: 16px;
}
.hud-db {
  color: #8a8a8a;
  font-size: 12px;
  width: 37px;
}
.hud-sep {
  width: 1px;
  height: 20px;
  background: #777;
}
.hud-pin {
  width: 13px;
  height: 15px;
  margin-left: 1px;
  display: flex;
  align-items: center;
  justify-content: center;
  background: #141414;
  border-radius: 2px;
}
.splitter {
  height: 9px;
  margin-left: 8px;
  background: #333;
  position: relative;
}
.splitter span {
  position: absolute;
  left: 460px;
  top: 3px;
  width: 22px;
  height: 3px;
  background: repeating-linear-gradient(to right, #aaa 0 1px, transparent 1px 2px);
}
.spectro {
  margin-left: 8px;
  height: 515px;
  line-height: 0;
}
</style>
